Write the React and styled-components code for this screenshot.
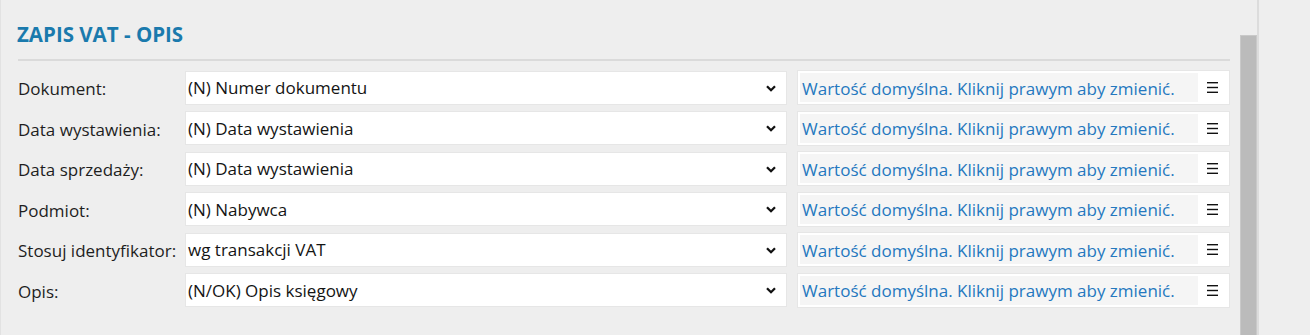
import styled, { createGlobalStyle } from "styled-components";

const GlobalStyle = createGlobalStyle`
  html, body {
    margin: 0;
    padding: 0;
    background: #eeeeee;
    font-family: "Open Sans", "Noto Sans", sans-serif;
  }
`;

const Page = styled.div`
  display: flex;
  width: 1310px;
  height: 335px;
  overflow: hidden;
  background: #eeeeee;
`;

const Panel = styled.div`
  flex: 0 0 1240px;
  min-width: 0;
  box-sizing: border-box;
  border-left: 1px solid #e2e2e2;
  padding: 20px 10px 0 16px;
`;

const ScrollTrack = styled.div`
  flex: 0 0 19px;
  display: flex;
  flex-direction: column;
  padding-top: 35px;
  box-sizing: border-box;
  border-right: 2px solid #dcdcdc;
`;

const ScrollThumb = styled.div`
  flex: 1;
  background: #bbbbbb;
  border: 1px solid #c9c9c9;
  border-bottom: none;
`;

const Title = styled.h2`
  margin: 0;
  font-size: 20.5px;
  font-weight: 700;
  line-height: 28px;
  color: #1a7aad;
`;

const Divider = styled.div`
  height: 2px;
  background: #dadada;
  margin: 11px 0 9px 1px;
`;

const Rows = styled.div`
  display: flex;
  flex-direction: column;
  gap: 5.5px;
`;

const Row = styled.div`
  display: grid;
  grid-template-columns: 158px 602px 433px;
  column-gap: 10px;
  align-items: center;
  height: 35px;
`;

const Label = styled.div`
  font-size: 17px;
  color: #1e1e1e;
  padding-left: 1px;
  padding-top: 2px;
  white-space: nowrap;
`;

const Select = styled.div`
  box-sizing: border-box;
  height: 34px;
  background: #ffffff;
  border: 1px solid #e6e6e6;
  display: flex;
  align-items: center;
  justify-content: space-between;
  padding: 0 10px 0 2px;
  font-size: 17px;
  color: #141414;
  white-space: nowrap;
`;

const Chevron = styled.svg`
  width: 10px;
  height: 7px;
  margin-top: 1px;
`;

const DefaultBox = styled.div`
  box-sizing: border-box;
  height: 35px;
  background: #ffffff;
  border: 1px solid #e6e6e6;
  padding: 2px;
  display: flex;
  align-items: stretch;
`;

const DefaultText = styled.div`
  flex: 0 0 398px;
  background: #f5f5f5;
  display: flex;
  align-items: center;
  padding-left: 2px;
  padding-top: 1px;
  box-sizing: border-box;
  font-size: 17px;
  color: #2478bf;
  white-space: nowrap;
  cursor: context-menu;
`;

const MenuButton = styled.div`
  flex: 1;
  display: flex;
  align-items: center;
  justify-content: center;
  padding-right: 1px;
`;

const MenuIcon = () => (
  <svg width="11" height="11" viewBox="0 0 11 11">
    <rect x="0" y="0" width="11" height="1.4" fill="#111" />
    <rect x="0" y="4.8" width="11" height="1.4" fill="#111" />
    <rect x="0" y="9.6" width="11" height="1.4" fill="#111" />
  </svg>
);

const fields = [
  { label: "Dokument:", value: "(N) Numer dokumentu" },
  { label: "Data wystawienia:", value: "(N) Data wystawienia" },
  { label: "Data sprzedaży:", value: "(N) Data wystawienia" },
  { label: "Podmiot:", value: "(N) Nabywca" },
  { label: "Stosuj identyfikator:", value: "wg transakcji VAT" },
  { label: "Opis:", value: "(N/OK) Opis księgowy" },
];

const App = () => {
  return (
    <>
      <GlobalStyle />
      <Page>
        <Panel>
          <Title>ZAPIS VAT - OPIS</Title>
          <Divider />
          <Rows>
            {fields.map((f) => (
              <Row key={f.label}>
                <Label>{f.label}</Label>
                <Select>
                  <span>{f.value}</span>
                  <Chevron viewBox="0 0 10 7">
                    <path
                      d="M1 1.2 L5 5.2 L9 1.2"
                      fill="none"
                      stroke="#111"
                      strokeWidth="2.3"
                    />
                  </Chevron>
                </Select>
                <DefaultBox>
                  <DefaultText>
                    Wartość domyślna. Kliknij prawym aby zmienić.
                  </DefaultText>
                  <MenuButton>
                    <MenuIcon />
                  </MenuButton>
                </DefaultBox>
              </Row>
            ))}
          </Rows>
        </Panel>
        <ScrollTrack>
          <ScrollThumb />
        </ScrollTrack>
      </Page>
    </>
  );
};

export default App;
